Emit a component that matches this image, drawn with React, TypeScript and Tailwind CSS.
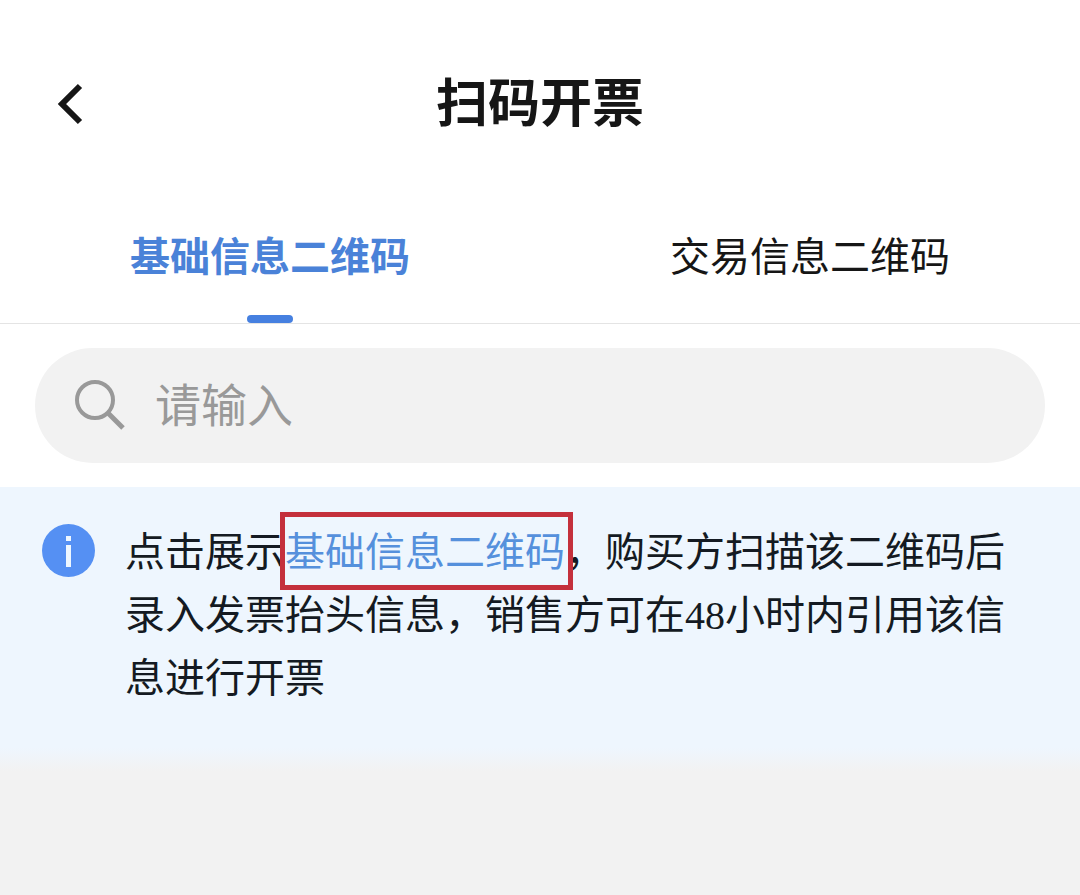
import React, { useState } from 'react';

type TabKey = 'basic' | 'trade';

const tabs: { key: TabKey; label: string }[] = [
  { key: 'basic', label: '基础信息二维码' },
  { key: 'trade', label: '交易信息二维码' },
];

const BackIcon = () => (
  <svg width="28" height="44" viewBox="0 0 28 44" fill="none" aria-hidden="true">
    <path d="M24 4 L6 22 L24 40" stroke="#161616" strokeWidth="6" />
  </svg>
);

const SearchIcon = () => (
  <svg width="52" height="52" viewBox="0 0 52 52" fill="none" stroke="#999999" strokeWidth="4" aria-hidden="true">
    <circle cx="20" cy="20" r="18" />
    <path d="M33 33 L48 48" strokeWidth="5" />
  </svg>
);

const InfoIcon = () => (
  <svg width="53" height="53" viewBox="0 0 53 53" className="shrink-0" aria-hidden="true">
    <circle cx="26.5" cy="26.5" r="26.5" fill="#5590f3" />
    <rect x="24" y="12" width="5" height="5" fill="#eef7ff" />
    <rect x="24" y="21" width="5" height="22" fill="#eef7ff" />
  </svg>
);

const App = () => {
  const [active, setActive] = useState<TabKey>('basic');
  const [keyword, setKeyword] = useState('');

  return (
    <div className="min-h-screen bg-[#f2f2f2] font-['Noto_Sans_CJK_SC',sans-serif] text-[#161616]">
      <div className="bg-white">
        <header className="grid grid-cols-[1fr_auto_1fr] items-center px-14 pt-15 pb-11">
          <button type="button" aria-label="返回" className="justify-self-start">
            <BackIcon />
          </button>
          <h1 className="pb-2 text-[52px] leading-[80px] font-bold">扫码开票</h1>
        </header>

        <nav role="tablist" className="flex border-b border-[#e4e4e4]">
          {tabs.map((tab) => {
            const selected = tab.key === active;
            return (
              <button
                key={tab.key}
                type="button"
                role="tab"
                aria-selected={selected}
                onClick={() => setActive(tab.key)}
                className={`flex flex-1 flex-col items-center text-[40px] leading-[60px] ${
                  selected ? 'font-bold text-[#4a82d8]' : ''
                }`}
              >
                <span className="pt-8 pb-[31px]">{tab.label}</span>
                <span className={`h-2 w-[46px] rounded-full ${selected ? 'bg-[#4680e0]' : ''}`} />
              </button>
            );
          })}
        </nav>

        <div className="px-[35px] py-6">
          <label className="flex h-[115px] items-center gap-7 rounded-full bg-[#f2f2f2] px-10">
            <SearchIcon />
            <input
              type="text"
              aria-label="搜索"
              placeholder="请输入"
              value={keyword}
              onChange={(e) => setKeyword(e.target.value)}
              className="min-w-0 flex-1 bg-transparent pb-2 text-[46px] leading-[60px] outline-none placeholder:text-[#999999]"
            />
          </label>
        </div>
      </div>

      <section className="flex items-start gap-[30px] bg-[#eef6fe] pt-[31px] pr-[60px] pb-10 pl-[42px]">
        <div className="flex h-[65px] items-center">
          <InfoIcon />
        </div>
        <p className="flex-1 text-[40px] leading-[63px] text-[#141a22]">
          点击展示
          <a href="#basic" className="relative whitespace-nowrap text-[#5590dc]">
            基础信息二维码
            {/* 红框标注 */}
            <span className="absolute -top-2 -right-2 -bottom-3 -left-[5px] border-5 border-[#c4303c]" />
          </a>
          ，购买方扫描该二维码后录入发票抬头信息，销售方可在
          <span className="font-['Liberation_Serif',serif] leading-none">48</span>
          小时内引用该信息进行开票
        </p>
      </section>
      <div className="h-6 bg-linear-to-b from-[#eef6fe] to-[#f2f2f2]" />
    </div>
  );
};

export default App;
